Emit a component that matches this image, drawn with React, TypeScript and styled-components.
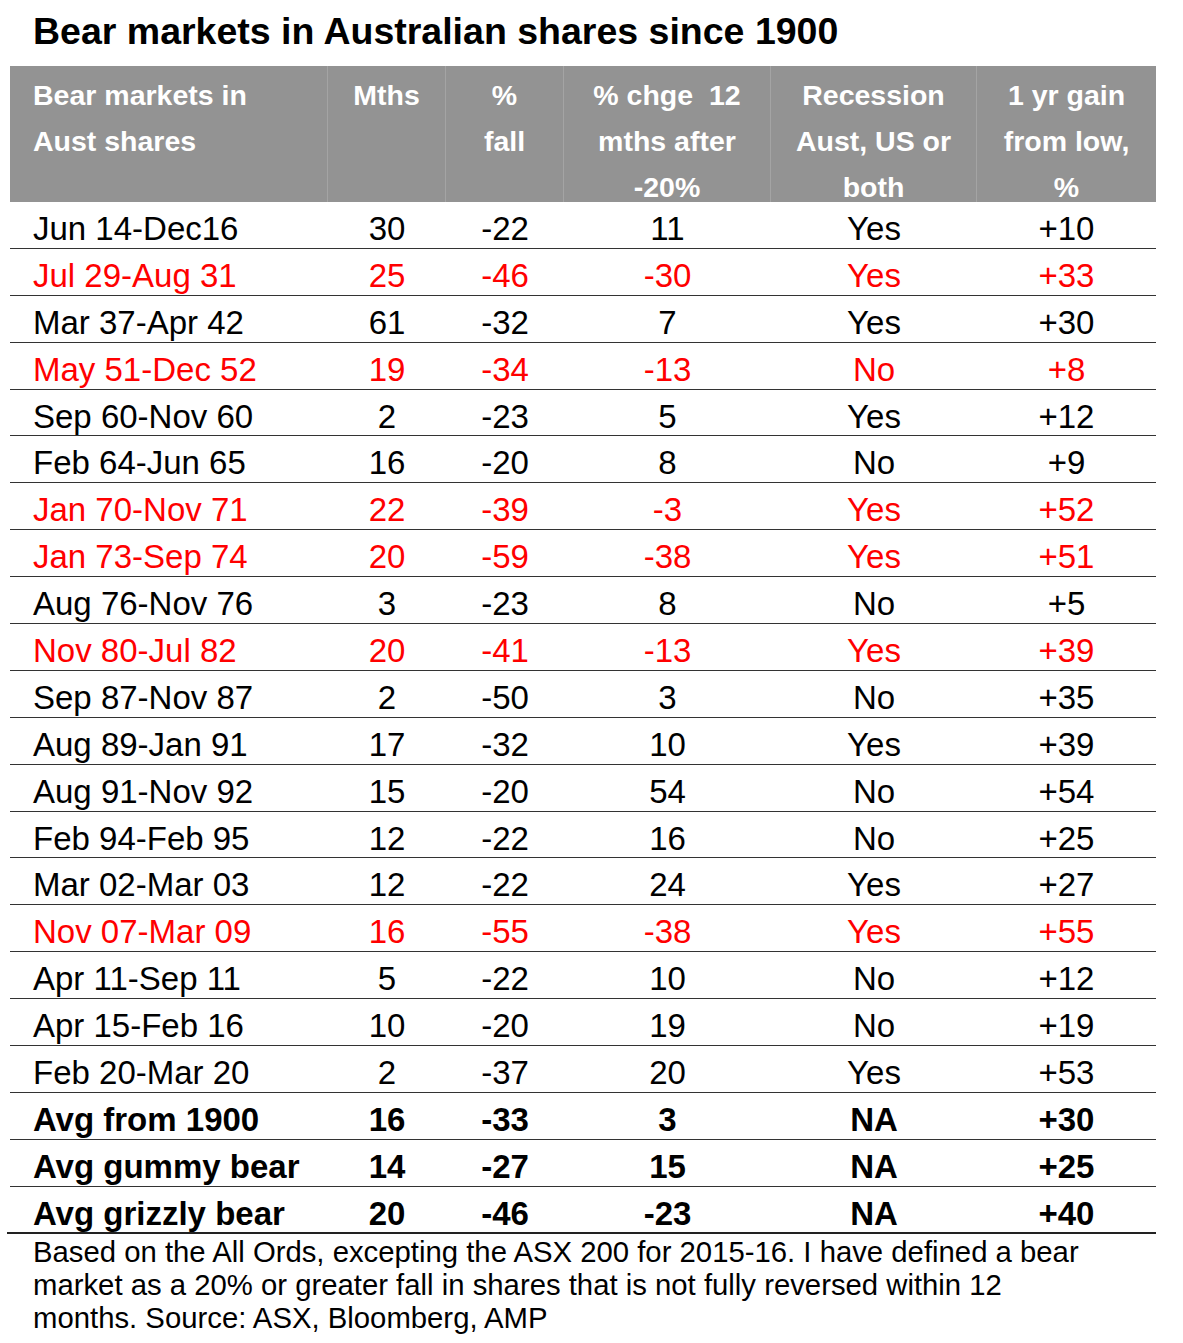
import React from "react";
import styled, { createGlobalStyle } from "styled-components";

const Global = createGlobalStyle`
  html, body { margin: 0; padding: 0; background: #ffffff; }
  body { font-family: "Liberation Sans", Arial, sans-serif; color: #000; }
`;

const Page = styled.div`
  width: 1183px;
  padding-left: 10px;
  box-sizing: border-box;
`;

const Title = styled.h1`
  margin: 0;
  padding: 11px 0 0 23px;
  height: 66px;
  box-sizing: border-box;
  font-size: 37.5px;
  line-height: 40px;
  font-weight: 700;
`;

const COLS = "318px 118px 118px 207px 206px 179px";

const Table = styled.div`
  width: 1146px;
  display: flex;
  flex-direction: column;
`;

const HeaderRow = styled.div`
  display: grid;
  grid-template-columns: ${COLS};
  height: 136px;
  background: #939393;
  overflow: hidden;
`;

const HeadCell = styled.div<{ $left?: boolean; $last?: boolean }>`
  padding: 6px ${(p) => (p.$left ? "0 0 23px" : "0")};
  text-align: ${(p) => (p.$left ? "left" : "center")};
  border-right: ${(p) => (p.$last ? "none" : "1px solid #a4a4a4")};
  color: #ffffff;
  font-weight: 700;
  font-size: 28.5px;
  line-height: 46px;
  white-space: pre;
`;

const Row = styled.div<{ $bold?: boolean; $red?: boolean; $final?: boolean }>`
  display: grid;
  grid-template-columns: ${COLS};
  height: 46.9px;
  box-sizing: border-box;
  border-bottom: ${(p) => (p.$final ? "2.5px solid #222" : "1.5px solid #333")};
  margin-left: ${(p) => (p.$final ? "-3px" : "0")};
  padding-left: ${(p) => (p.$final ? "3px" : "0")};
  color: ${(p) => (p.$red ? "#ff0000" : "#000")};
  font-weight: ${(p) => (p.$bold ? 700 : 400)};
  font-size: 33px;
  line-height: 40px;
`;

const Cell = styled.div<{ $left?: boolean }>`
  padding-top: 7px;
  padding-left: ${(p) => (p.$left ? "23px" : "0")};
  text-align: ${(p) => (p.$left ? "left" : "center")};
  white-space: nowrap;
`;

const Footer = styled.p`
  margin: 0;
  padding: 1px 0 0 23px;
  font-size: 29.3px;
  line-height: 33px;
  width: 1083px;
  box-sizing: border-box;
`;

type R = [string, string, string, string, string, string, boolean?, boolean?];

const rows: R[] = [
  ["Jun 14-Dec16", "30", "-22", "11", "Yes", "+10"],
  ["Jul 29-Aug 31", "25", "-46", "-30", "Yes", "+33", true],
  ["Mar 37-Apr 42", "61", "-32", "7", "Yes", "+30"],
  ["May 51-Dec 52", "19", "-34", "-13", "No", "+8", true],
  ["Sep 60-Nov 60", "2", "-23", "5", "Yes", "+12"],
  ["Feb 64-Jun 65", "16", "-20", "8", "No", "+9"],
  ["Jan 70-Nov 71", "22", "-39", "-3", "Yes", "+52", true],
  ["Jan 73-Sep 74", "20", "-59", "-38", "Yes", "+51", true],
  ["Aug 76-Nov 76", "3", "-23", "8", "No", "+5"],
  ["Nov 80-Jul 82", "20", "-41", "-13", "Yes", "+39", true],
  ["Sep 87-Nov 87", "2", "-50", "3", "No", "+35"],
  ["Aug 89-Jan 91", "17", "-32", "10", "Yes", "+39"],
  ["Aug 91-Nov 92", "15", "-20", "54", "No", "+54"],
  ["Feb 94-Feb 95", "12", "-22", "16", "No", "+25"],
  ["Mar 02-Mar 03", "12", "-22", "24", "Yes", "+27"],
  ["Nov 07-Mar 09", "16", "-55", "-38", "Yes", "+55", true],
  ["Apr 11-Sep 11", "5", "-22", "10", "No", "+12"],
  ["Apr 15-Feb 16", "10", "-20", "19", "No", "+19"],
  ["Feb 20-Mar 20", "2", "-37", "20", "Yes", "+53"],
  ["Avg from 1900", "16", "-33", "3", "NA", "+30", false, true],
  ["Avg gummy bear", "14", "-27", "15", "NA", "+25", false, true],
  ["Avg grizzly bear", "20", "-46", "-23", "NA", "+40", false, true],
];

const headers: string[] = [
  "Bear markets in\nAust shares",
  "Mths",
  "%\nfall",
  "% chge  12\nmths after\n-20%",
  "Recession\nAust, US or\nboth",
  "1 yr gain\nfrom low,\n%",
];

export default function App() {
  return (
    <Page>
      <Global />
      <Title>Bear markets in Australian shares since 1900</Title>
      <Table>
        <HeaderRow>
          {headers.map((h, i) => (
            <HeadCell key={i} $left={i === 0} $last={i === headers.length - 1}>
              {h}
            </HeadCell>
          ))}
        </HeaderRow>
        {rows.map((r, i) => (
          <Row key={i} $red={!!r[6]} $bold={!!r[7]} $final={i === rows.length - 1}>
            {r.slice(0, 6).map((c, j) => (
              <Cell key={j} $left={j === 0}>{c as string}</Cell>
            ))}
          </Row>
        ))}
      </Table>
      <Footer>
        Based on the All Ords, excepting the ASX 200 for 2015-16. I have defined a bear market as a 20% or greater fall in shares that is not fully reversed within 12 months. Source: ASX, Bloomberg, AMP
      </Footer>
    </Page>
  );
}
